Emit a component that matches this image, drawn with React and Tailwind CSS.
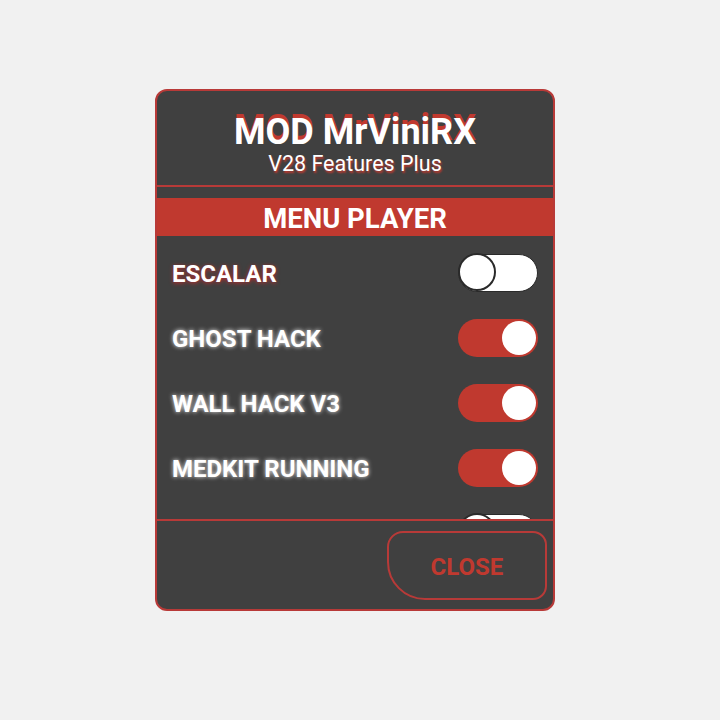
import React from "react";

function Toggle({ on }) {
  if (on) {
    return (
      <div className="relative h-[38px] w-[80px] rounded-full bg-[#c0392f] shrink-0">
        <div className="absolute right-[2px] top-[2px] h-[34px] w-[34px] rounded-full bg-white" />
      </div>
    );
  }
  return (
    <div className="relative h-[38px] w-[80px] rounded-full bg-white border-[1.5px] border-[#2a2a2a] shrink-0">
      <div className="absolute left-[-1px] top-[-1.5px] h-[38px] w-[38px] rounded-full bg-white border-[2px] border-[#2a2a2a]" />
    </div>
  );
}

function Row({ label, on }) {
  return (
    <div className="flex h-[65px] shrink-0 items-center justify-between pl-[15px] pr-[15px]">
      <span
        className="pt-[2px] text-[24px] font-bold text-white"
        style={{
          textShadow: on
            ? "0 0 4px rgba(255,255,255,0.9)"
            : "0 1px 4px rgba(200,40,40,0.95)",
        }}
      >
        {label}
      </span>
      <Toggle on={on} />
    </div>
  );
}

export default function App() {
  return (
    <div
      className="min-h-[720px] w-full bg-[#f1f1f1] pl-[155px] pt-[89px]"
      style={{ fontFamily: "Roboto, 'Liberation Sans', sans-serif" }}
    >
      <div className="flex h-[522px] w-[400px] flex-col overflow-hidden rounded-[12px] border-2 border-[#b83a38] bg-[#404040]">
        <div className="flex h-[94px] shrink-0 flex-col items-center pt-[20px]">
          <div
            className="text-[36px] font-bold leading-[42px] text-white"
            style={{ textShadow: "0 -4px 0 #c0392f" }}
          >
            MOD MrViniRX
          </div>
          <div
            className="text-[21.5px] leading-[22px] text-white"
            style={{ textShadow: "1px 2px 2px #c0392f" }}
          >
            V28 Features Plus
          </div>
        </div>
        <div className="h-[2px] shrink-0 bg-[#b83a38]" />
        <div className="h-[11px] shrink-0" />
        <div className="flex h-[38px] shrink-0 items-center justify-center bg-[#c0392f] pt-[3px]">
          <span className="text-[27.5px] font-bold leading-[35px] text-white">MENU PLAYER</span>
        </div>
        <div className="flex h-[283px] shrink-0 flex-col overflow-hidden pt-[4px]">
          <Row label="ESCALAR" on={false} />
          <Row label="GHOST HACK" on />
          <Row label="WALL HACK V3" on />
          <Row label="MEDKIT RUNNING" on />
          <Row label="" on={false} />
        </div>
        <div className="h-[2px] shrink-0 bg-[#b83a38]" />
        <div className="flex flex-1 items-start justify-end pr-[6px] pt-[10px]">
          <div className="flex h-[69px] w-[160px] items-center justify-center rounded-tl-[16px] rounded-tr-[14px] rounded-br-[14px] rounded-bl-[38px] border-2 border-[#b83a38]">
            <span className="pt-[2px] text-[24px] font-bold text-[#c0392f]">CLOSE</span>
          </div>
        </div>
      </div>
    </div>
  );
}
